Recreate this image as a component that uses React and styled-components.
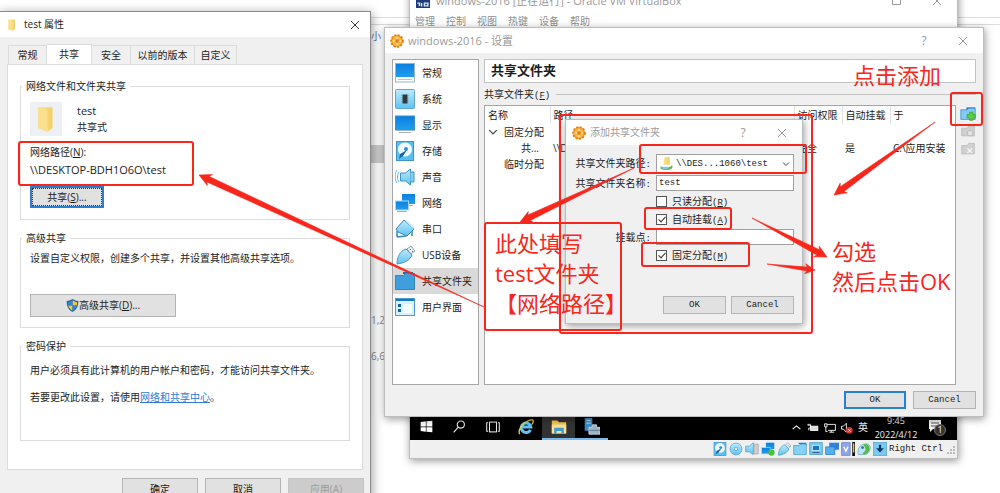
import React from "react";
import styled, { createGlobalStyle, css } from "styled-components";

const GlobalStyle = createGlobalStyle`
  * { box-sizing: border-box; }
  body { margin: 0; background: #fff; }
  button, input, select { font: inherit; color: inherit; margin: 0; }
`;

const SANS = `"Open Sans", "Noto Sans CJK SC", sans-serif`;
const MONO = `"Liberation Mono", "Noto Sans CJK SC", monospace`;
const RED = "#f9261c";

const Desktop = styled.main`
  position: relative;
  width: 100%;
  height: 100vh;
  overflow: hidden;
  background: #fff;
  font: 10px/17px ${SANS};
  color: #1c1c1c;
`;

/* ---------- file list behind the windows ---------- */

const FileList = styled.section`
  display: flex;
  flex-direction: column;
  color: #8a8a8a;
`;
const FileBar = styled.div`
  height: ${(p) => p.$h}px;
  border-bottom: 1px solid #dcdcdc;
`;
const FileRow = styled.div`
  width: 400px;
  height: ${(p) => p.$h || 18}px;
  padding-left: 371px;
  color: ${(p) => (p.$head ? "#5b6b94" : "#8a8a8a")};
  background: ${(p) => (p.$selected ? "#cccccc" : "transparent")};
`;

/* ---------- shared window parts ---------- */

const Window = styled.section`
  position: absolute;
  left: ${(p) => p.$x}px;
  top: ${(p) => p.$y}px;
  width: ${(p) => p.$w}px;
  height: ${(p) => p.$h}px;
  display: flex;
  flex-direction: column;
  background: #f0f0f0;
  border: 1px solid ${(p) => p.$edge || "#bdbdbd"};
  box-shadow: 1px 2px ${(p) => p.$blur || 8}px rgba(0, 0, 0, 0.4);
`;
const TitleBar = styled.header`
  display: flex;
  align-items: center;
  gap: ${(p) => p.$gap || 6}px;
  height: ${(p) => p.$h || 25}px;
  flex: none;
  padding: 0 ${(p) => p.$end || 15}px 0 ${(p) => p.$start || 6}px;
  background: #fff;
  color: ${(p) => (p.$active ? "#1c1c1c" : "#9a9a9a")};
`;
const Title = styled.h1`
  flex: 1;
  margin: 0;
  font-size: ${(p) => p.$size || 10}px;
  line-height: 17px;
  font-weight: 400;
  white-space: nowrap;
`;
const CaptionButton = styled.button`
  display: flex;
  align-items: center;
  justify-content: center;
  width: 10px;
  height: 17px;
  margin-left: ${(p) => p.$gap || 0}px;
  padding: 0;
  border: 0;
  background: none;
  font-size: 12px;
`;
const Close = ({ gap, color = "#9a9a9a" }) => (
  <CaptionButton $gap={gap} aria-label="关闭">
    <svg width="10" height="10" viewBox="0 0 10 10" stroke={color} fill="none">
      <path d="M1 1 9 9M9 1 1 9" />
    </svg>
  </CaptionButton>
);

const PushButton = styled.button`
  display: inline-flex;
  align-items: center;
  justify-content: center;
  width: ${(p) => p.$w}px;
  height: ${(p) => p.$h || 18}px;
  flex: none;
  padding: 0;
  border: 1px solid #b4b4b4;
  background: #e1e1e1;
  white-space: nowrap;
  ${(p) => p.$mono && css`font: 9px/12px ${MONO};`}
  ${(p) => p.$primary && css`border: 2px solid #2b7fd0;`}
  ${(p) => p.$focused && css`
    outline: 1px dotted #333;
    outline-offset: -3px;
  `}
  &:disabled { color: #9b9b9b; background: #cccccc; border-color: #c4c4c4; }
`;

/* ---------- properties window ---------- */

const Tabs = styled.div`
  display: flex;
  align-items: flex-end;
  height: 27px;
  flex: none;
  padding-left: 8px;
`;
const Tab = styled.button`
  height: ${(p) => (p.$selected ? 21 : 19)}px;
  width: ${(p) => p.$w}px;
  margin-bottom: ${(p) => (p.$selected ? -1 : 0)}px;
  padding: 0 0 ${(p) => (p.$selected ? 2 : 0)}px;
  border: 1px solid #dcdcdc;
  border-bottom: 0;
  border-left-width: ${(p) => (p.$first ? 1 : 0)}px;
  background: ${(p) => (p.$selected ? "#fff" : "#f0f0f0")};
  line-height: 17px;
  white-space: nowrap;
`;
const TabPanel = styled.div`
  display: flex;
  flex-direction: column;
  gap: 11px;
  height: 406px;
  flex: none;
  margin: 0 7px;
  padding: 14px 12px 0;
  border: 1px solid #dcdcdc;
  background: #fff;
`;
const Group = styled.fieldset`
  min-width: 0;
  height: ${(p) => p.$h}px;
  margin: 0;
  padding: 0 9px;
  border: 1px solid #dcdcdc;
`;
const Legend = styled.legend`
  padding: 0 4px;
  margin-left: -8px;
  line-height: 14px;
`;
const ShareRow = styled.div`
  display: flex;
  gap: 15px;
  margin: 9px 0 8px;
`;
const Thumb = styled.div`
  display: flex;
  align-items: center;
  justify-content: center;
  width: 32px;
  height: 34px;
  background: #eef0f3;
`;
const Text = styled.p`
  margin: ${(p) => p.$top || 0}px 0 ${(p) => p.$bottom || 0}px;
  font-size: ${(p) => (p.$latin ? 11 : 10)}px;
  line-height: 17px;
  white-space: nowrap;
`;
const Link = styled.a`
  color: #2a7bd8;
`;
const PropertyActions = styled.footer`
  display: flex;
  justify-content: flex-end;
  gap: 7px;
  padding: 8px 6px 0;
`;

/* ---------- virtual machine window ---------- */

const MenuBar = styled.nav`
  display: flex;
  gap: 11px;
  height: 15px;
  padding-left: 5px;
  background: #fff;
`;
const MenuItem = styled.button`
  padding: 0;
  border: 0;
  background: none;
  color: #8f8f8f;
  line-height: 15px;
`;
const GuestScreen = styled.div`
  flex: 1;
  background: #000;
`;
const TaskBar = styled.div`
  display: flex;
  align-items: center;
  height: 25px;
  flex: none;
  background: #000;
  color: #f0f0f0;
`;
const TaskButton = styled.button`
  display: flex;
  align-items: center;
  justify-content: center;
  width: 33px;
  height: 25px;
  padding: 0;
  border: 0;
  border-bottom: 2px solid ${(p) => (p.$running ? "#76b9ed" : "transparent")};
  background: ${(p) => (p.$current ? "#333" : "none")};
`;
const Tray = styled.div`
  display: flex;
  align-items: center;
  gap: 5px;
  margin-left: auto;
  padding-right: 11px;
`;
const Clock = styled.time`
  width: 46px;
  font-size: 9px;
  line-height: 14px;
  text-align: center;
  white-space: nowrap;
`;
const StatusBar = styled.footer`
  display: flex;
  align-items: center;
  justify-content: flex-end;
  gap: 2px;
  height: 18px;
  flex: none;
  background: #f0f0f0;
  font: 9px/12px ${MONO};
`;

/* ---------- settings window ---------- */

const SettingsBody = styled.div`
  display: grid;
  grid-template-columns: 87px 1fr;
  column-gap: 5px;
  padding: 6px 7px 0;
  height: 332px;
`;
const Categories = styled.nav`
  border: 1px solid #a6a6a6;
  background: #fff;
`;
const Category = styled.button`
  display: flex;
  align-items: center;
  gap: 7px;
  width: 100%;
  height: 26px;
  padding: 0 2px;
  border: 0;
  background: ${(p) => (p.$selected ? "#d9d9d9" : "none")};
  white-space: nowrap;
`;
const Page = styled.div`
  display: flex;
  flex-direction: column;
  min-width: 0;
`;
const PageTitle = styled.h2`
  height: 24px;
  flex: none;
  margin: 0;
  padding: 0 6px;
  border: 1px solid #c3c3c3;
  background: #fff;
  font: 700 13px/22px "Liberation Serif", "Noto Sans CJK SC", serif;
`;
const SectionLabel = styled.div`
  display: flex;
  align-items: center;
  gap: 6px;
  height: 22px;
  flex: none;
  &::after { content: ""; flex: 1; height: 1px; background: #c3c3c3; }
`;
const Mono = styled.span`
  font: 9px/12px ${MONO};
`;
const ListArea = styled.div`
  display: flex;
  gap: 3px;
  flex: 1;
`;
const TableFrame = styled.div`
  flex: 1;
  min-width: 0;
  overflow: hidden;
  border: 1px solid #a6a6a6;
  background: #fff;
`;
const Table = styled.table`
  width: 100%;
  table-layout: fixed;
  border-collapse: collapse;
  th, td {
    height: 16px;
    padding: 0 0 0 3px;
    line-height: 15px;
    font-weight: 400;
    text-align: left;
    white-space: nowrap;
  }
  thead th { height: 18px; border-right: 1px solid #e2e2e2; }
  thead th:last-child { border-right: 0; }
`;
const Branch = styled.span`
  display: flex;
  align-items: center;
  gap: 6px;
  padding-left: ${(p) => p.$indent || 0}px;
`;
const ToolColumn = styled.div`
  display: flex;
  flex-direction: column;
  align-items: center;
  gap: 2px;
  width: 17px;
`;
const ToolButton = styled.button`
  width: 16px;
  height: 16px;
  padding: 0;
  border: 0;
  background: none;
  line-height: 0;
`;
const Actions = styled.footer`
  display: flex;
  justify-content: flex-end;
  gap: ${(p) => p.$gap || 7}px;
  padding: ${(p) => p.$top}px ${(p) => p.$side}px 0;
`;

/* ---------- add share dialog ---------- */

const Form = styled.form`
  display: grid;
  grid-template-columns: 78px 1fr;
  grid-template-rows: 19px repeat(5, 16px);
  gap: 2px 5px;
  align-items: center;
  padding: 9px 8px 0 7px;
`;
const FieldLabel = styled.label`
  text-align: right;
  white-space: nowrap;
`;
const SelectBox = styled.div`
  display: flex;
  align-items: center;
  gap: 3px;
  height: 19px;
  padding: 0 3px;
  border: 1px solid #a0a0a0;
  background: #fff;
`;
const Select = styled.select`
  flex: 1;
  min-width: 0;
  padding: 0;
  border: 0;
  appearance: none;
  background: none;
  font: 9px/12px ${MONO};
`;
const Input = styled.input`
  width: 100%;
  min-width: 0;
  height: 16px;
  padding: 0 2px;
  border: 1px solid #a0a0a0;
  background: #fff;
  font: 9px/12px ${MONO};
`;
const Check = styled.label`
  grid-column: 2;
  display: flex;
  align-items: center;
  gap: 5px;
  white-space: nowrap;
`;
const Box = styled.input`
  display: grid;
  place-content: center;
  width: 11px;
  height: 11px;
  appearance: none;
  border: 1px solid #555;
  background: #fff;
  &:checked::after {
    content: "";
    width: 3px;
    height: 6px;
    margin-bottom: 2px;
    border: solid #333;
    border-width: 0 1px 1px 0;
    transform: rotate(42deg);
  }
`;

/* ---------- red annotations ---------- */

const Frame = styled.div`
  position: absolute;
  left: ${(p) => p.$x}px;
  top: ${(p) => p.$y}px;
  width: ${(p) => p.$w}px;
  height: ${(p) => p.$h}px;
  border: 2px solid ${RED};
  border-radius: 3px;
  pointer-events: none;
`;
const Note = styled.p`
  position: absolute;
  left: ${(p) => p.$x}px;
  top: ${(p) => p.$y}px;
  margin: 0;
  color: ${RED};
  font-size: 22px;
  line-height: 30px;
  white-space: nowrap;
`;
const ArrowLayer = styled.svg`
  position: absolute;
  left: 0;
  top: 0;
  width: 100%;
  height: 100%;
  pointer-events: none;
`;

function Arrow({ from, to, head = 12, spread = 6, body = 3 }) {
  const [x1, y1] = from;
  const [x2, y2] = to;
  const len = Math.hypot(x2 - x1, y2 - y1);
  const ux = (x2 - x1) / len;
  const uy = (y2 - y1) / len;
  const at = (back, side) =>
    `${(x2 - ux * back - uy * side).toFixed(1)},${(y2 - uy * back + ux * side).toFixed(1)}`;
  const pts = [
    `${x1},${y1}`,
    at(head - 2, body),
    at(head, spread),
    `${x2},${y2}`,
    at(head, -spread),
    at(head - 2, -body),
  ];
  return <polygon points={pts.join(" ")} fill={RED} stroke={RED} strokeWidth="0.6" />;
}

/* ---------- icons ---------- */

const Gradients = () => (
  <svg width="0" height="0" style={{ position: "absolute" }} aria-hidden="true">
    <defs>
      <linearGradient id="screen" x1="0" y1="0" x2="0" y2="1">
        <stop offset="0" stopColor="#0c7fe0" />
        <stop offset="1" stopColor="#1f9fee" />
      </linearGradient>
      <linearGradient id="pale" x1="0" y1="0" x2="0" y2="1">
        <stop offset="0" stopColor="#bfeafd" />
        <stop offset="1" stopColor="#5fc3f0" />
      </linearGradient>
      <linearGradient id="folder" x1="0" y1="0" x2="1" y2="0">
        <stop offset="0" stopColor="#fbe49a" />
        <stop offset="1" stopColor="#f3cf62" />
      </linearGradient>
    </defs>
  </svg>
);

const shapes = {
  general: (
    <>
      <rect x=".5" y=".5" width="19" height="18.5" fill="#fff" stroke="#9ab4c8" />
      <rect x="1" y="1" width="18" height="13" fill="url(#screen)" />
      <path d="M3 16.5h14" stroke="#b8c8d4" />
    </>
  ),
  system: (
    <>
      <rect x=".5" y=".5" width="19" height="19" rx="1" fill="url(#pale)" stroke="#59a9d2" />
      <rect x="7.5" y="5.5" width="5" height="9" fill="#35383c" />
      <path d="M6.500 6v8M13.500 6v8" stroke="#8fb4c8" strokeDasharray="1 1" />
    </>
  ),
  display: (
    <>
      <rect x=".5" y="1" width="19" height="14" fill="url(#screen)" stroke="#3790cc" />
      <path d="M1 15.5h18M4 17.5h12" stroke="#9fb8c9" />
    </>
  ),
  storage: (
    <>
      <rect x="1.5" y=".5" width="17" height="19" fill="#59bff0" stroke="#3a94c9" />
      <circle cx="10" cy="8.5" r="7" fill="#eef8fd" />
      <circle cx="11" cy="8" r="2" fill="#2c93d3" />
      <path d="m4 18 1-5 7-4-4 6z" fill="#1668a5" />
    </>
  ),
  audio: (
    <>
      <path d="M5.500 6h5l5-4v16l-5-4h-5z" fill="url(#pale)" stroke="#3e94c4" />
      <path d="M4 5C2 8 2 12 4 15M2 3C-.5 7-.5 12 2 16" stroke="#62b3dd" fill="none" />
      <path d="M15.500 5h3.500v10h-3.500" fill="#7ed0f5" stroke="#3e94c4" />
    </>
  ),
  network: (
    <>
      <rect x="7" y="1" width="13" height="10" fill="url(#screen)" />
      <path d="M10 12.500h8" stroke="#93b5ca" />
      <rect x=".5" y="8" width="13" height="9" fill="url(#screen)" stroke="#a5d7f2" />
      <path d="M2 18.500h10" stroke="#93b5ca" />
    </>
  ),
  serial: (
    <>
      <path d="m9 1 10 9-7 7-9-4-2-3z" fill="url(#pale)" stroke="#3688bd" />
      <path d="M12 2l7 7" stroke="#d7eefa" strokeWidth="2" />
      <path d="M2 12v6M17 12v5M11 17l-9 1" stroke="#3688bd" fill="none" strokeWidth="1.500" />
    </>
  ),
  usb: (
    <>
      <path d="m12 4 4-3 4 5-4 3z" fill="#f2f7fa" stroke="#8aa3b3" />
      <path d="M11 4 17 10c-2 5-7 8-15 9C2 12 5 6 11 4z" fill="url(#pale)" stroke="#4a9bc8" />
      <path d="m15 4 1 1M17 6l1 1" stroke="#555" />
    </>
  ),
  folder: (
    <>
      <path d="M8 3V1h10v3" fill="#1870ae" />
      <path d="M.5 4.500h8l2-2h9v16H.5z" fill="#3f9edb" stroke="#2f86c2" />
    </>
  ),
  ui: (
    <>
      <rect x=".5" y="1.500" width="19" height="17" fill="#d4f1fd" stroke="#4b9bc8" />
      <path d="M1 3h18" stroke="#1a78bd" strokeWidth="2" />
      <path d="M3 7h3v3H3zM3 12h3v3H3z" fill="#17639f" />
      <path d="M8 7h9v9H8z" fill="#f5fcff" />
    </>
  ),
  gear: (
    <>
      <circle cx="10" cy="10" r="8.500" fill="#f6a01f" stroke="#e08217" strokeWidth="2.500" strokeDasharray="3 2" />
      <circle cx="10" cy="10" r="6.500" fill="#fbb645" />
      <circle cx="10" cy="10" r="2.500" fill="#e07e12" />
      <path d="M10 4v3M10 13v3M4 10h3M13 10h3" stroke="#fff0c8" strokeWidth="1.500" />
    </>
  ),
  openFolder: (
    <>
      <path d="M4 1h11v16l-4 3v-3H4z" fill="url(#folder)" />
      <path d="M4 1 11 3v17L4 17z" fill="#f9df8e" />
    </>
  ),
  shareFolder: (
    <>
      <path d="M7 0h8v12H5z" fill="url(#folder)" />
      <path d="M1 14c4 4 14 4 18-2v5c-4 4-14 4-18 1z" fill="#57b947" />
      <path d="M4 15h8v4H4z" fill="#7cc7ec" />
    </>
  ),
  shield: (
    <>
      <path d="M10 0c3 2 6 3 9 3 0 8-2 13-9 17C3 16 1 11 1 3c3 0 6-1 9-3z" fill="#2864a8" />
      <path d="M10 2c2 1 5 3 7 3 0 2 0 3-.5 5H10z" fill="#f6c938" />
      <path d="M3.500 10H10v8c-4-2-6-5-6.500-8z" fill="#f6c938" />
      <path d="M10 10h6.500c-1 4-3 6-6.500 8z" fill="#2f86dc" />
      <path d="M10 2C8 3 5 5 3 5c0 2 0 3 .5 5H10z" fill="#2f86dc" />
    </>
  ),
  addShare: (
    <>
      <path d="M8 3h11v5H8z" fill="#2878bd" />
      <path d="M1 6h8l2-2h8v14H1z" fill="#7fcbf3" stroke="#3d92c9" />
      <path d="M12 9h4v3h3v4h-3v3h-4v-3H9v-4h3z" fill="#5fd03c" stroke="#3aa02a" />
    </>
  ),
  editShare: (
    <>
      <path d="M1 6h8l2-3h8v14H1z" fill="#d0d0d0" stroke="#b5b5b5" />
      <circle cx="13" cy="13" r="4" fill="#e2e2e2" stroke="#b0b0b0" />
    </>
  ),
  removeShare: (
    <>
      <path d="M1 5h8l2-3h8v15H1z" fill="#d0d0d0" stroke="#b5b5b5" />
      <path d="m9 9 7 7M16 9l-7 7" stroke="#f2f2f2" strokeWidth="2" />
    </>
  ),
  vm: (
    <>
      <rect width="20" height="20" fill="#1d3c78" />
      <path d="M2 13h3v4M8 13v5M12 13h5v4h-5z" stroke="#dfe8f5" strokeWidth="2" fill="none" />
    </>
  ),
  windows: <path d="m1 3 8-1v8H1zM10 2l9-1v9h-9zM1 11h8v7l-8-1zM10 11h9v8l-9-1z" fill="#fff" />,
  search: (
    <g stroke="#f0f0f0" strokeWidth="1.600" fill="none">
      <circle cx="12" cy="7" r="5.500" />
      <path d="m8 11-7 8" />
    </g>
  ),
  taskView: (
    <g stroke="#e8e8e8" strokeWidth="1.500" fill="none">
      <rect x="5" y="3" width="10" height="14" />
      <path d="M3 4H1v12h2M17 4h2v12h-2" />
    </g>
  ),
  ie: (
    <>
      <path d="M15.500 13.500A6 6 0 1 1 16 10H6" stroke="#5fc4f4" strokeWidth="3.800" fill="none" />
      <path d="M2 19C-1 13 9 1 18 1c2 1 1 4-1 6" stroke="#f0d33c" strokeWidth="1.600" fill="none" />
    </>
  ),
  explorer: (
    <>
      <path d="M1 2h7l2 2h9v14H1z" fill="#f5c75a" />
      <path d="M1 7h18v11H1z" fill="#fce196" />
      <path d="M4 18v-7h12v7h-3v-3H7v3z" fill="#3b9fc9" />
    </>
  ),
  server: (
    <>
      <path d="M2 0h9v15H2z" fill="#368fc9" />
      <path d="M4 3h5M4 6h5" stroke="#d8effb" />
      <path d="M7 11h4V8h5v3h4v8H7z" fill="#9ab3c4" stroke="#d2dde5" />
      <path d="M7 14.500h13" stroke="#5d7586" />
    </>
  ),
  chevronUp: <path d="m3 13 7-6 7 6" stroke="#fff" strokeWidth="2" fill="none" />,
  battery: (
    <>
      <rect x="6" y="7" width="12" height="7" fill="#ddd" stroke="#fff" strokeWidth="1.500" />
      <path d="M1 5h5v5H3v4M2 3v3M5 3v3" stroke="#fff" strokeWidth="1.500" fill="none" />
    </>
  ),
  lan: (
    <g stroke="#fff" strokeWidth="1.500" fill="none">
      <path d="M5 4h14v10H7M9 17h8M12 14v3" />
      <path d="M1 3h4v5H1zM3 8v8h3" />
    </g>
  ),
  muted: (
    <>
      <path d="M1 7h3l5-5v15l-5-5H1z" stroke="#fff" strokeWidth="1.500" fill="none" />
      <circle cx="14" cy="14" r="5.500" fill="#d9342b" />
      <path d="m12 12 4 4M16 12l-4 4" stroke="#fff" strokeWidth="1.500" />
    </>
  ),
  disc: (
    <>
      <circle cx="10" cy="10" r="8.500" fill="url(#pale)" stroke="#4f9fc9" />
      <circle cx="10" cy="10" r="2.500" fill="#e9f8ff" stroke="#4f9fc9" />
    </>
  ),
  speaker: (
    <>
      <path d="M1 6h5l6-5v17l-6-4H1z" fill="url(#pale)" stroke="#4c94bb" />
      <path d="M13 3h6v14h-6z" fill="#cfcfcf" stroke="#a3a3a3" />
    </>
  ),
  adapter: (
    <>
      <rect x="7" y="1" width="12" height="9" fill="url(#screen)" />
      <rect x="1" y="8" width="12" height="9" fill="url(#screen)" stroke="#a5d7f2" />
      <circle cx="15" cy="15" r="4.500" fill="#4cc23a" />
    </>
  ),
  shared: (
    <>
      <path d="M8 3V1h11v4" fill="#2678b8" />
      <path d="M1 5h8l2-2h8v15H1z" fill="#84d2f7" stroke="#3c97cd" />
    </>
  ),
  monitor: (
    <>
      <rect x="1" y="1" width="18" height="17" fill="#76c8f2" stroke="#3c97cd" />
      <rect x="5" y="5" width="10" height="7" fill="#1876c9" stroke="#e4f6ff" />
      <path d="M5 15h10" stroke="#2c5f86" strokeWidth="1.500" />
    </>
  ),
  windowsPair: (
    <>
      <rect x="6" y="1" width="14" height="10" fill="#2f83dc" />
      <rect x="1" y="7" width="13" height="11" fill="#55b0f0" stroke="#2b72c4" />
    </>
  ),
  chip: (
    <>
      <rect x="1" y="1" width="12" height="18" fill="#8fa6e8" stroke="#6573c2" />
      <path d="m4 7 3 6 3-6" stroke="#fff" strokeWidth="2" fill="none" />
      <rect x="16" y="0" width="4" height="20" fill="#111" />
      <path d="M18 2v13" stroke="#f2c531" strokeWidth="2" />
    </>
  ),
  mouse: (
    <>
      <path d="M2 18C-1 8 7 1 16 3c6 4 2 13-4 15z" fill="#bfe3ee" stroke="#5ba2b7" />
      <path d="M9 4c7-3 11 4 8 9-3 5-8 6-9 3 5-3 6-6 1-12z" fill="#54bb45" />
      <circle cx="8" cy="8" r="2" fill="#1f74a8" />
    </>
  ),
  hostKey: (
    <>
      <rect x=".5" y=".5" width="19" height="19" fill="#79c9f2" stroke="#53a5cf" />
      <path d="M8.500 4h3v5h4l-5.500 6-5.500-6h4z" fill="#0c3a5c" />
    </>
  ),
};

const Icon = ({ name, size = 20 }) => (
  <svg width={size} height={size} viewBox="0 0 20 20" aria-hidden="true" style={{ flex: "none" }}>
    {shapes[name]}
  </svg>
);

const Chevron = ({ color = "#444", size = 8 }) => (
  <svg width={size} height={size} viewBox="0 0 8 8" fill="none" stroke={color} aria-hidden="true">
    <path d="m1 2.500 3 3 3-3" />
  </svg>
);

/* ---------- windows ---------- */

const PropertiesWindow = () => (
  <Window $x={-1} $y={11} $w={372} $h={500} $edge="#8a8a8a" $blur={10}>
    <TitleBar $active $start={6} $end={10}>
      <Icon name="openFolder" size={12} />
      <Title>test 属性</Title>
      <Close color="#333" />
    </TitleBar>
    <Tabs role="tablist">
      <Tab role="tab" $w={39} $first>常规</Tab>
      <Tab role="tab" $w={45} $selected>共享</Tab>
      <Tab role="tab" $w={39}>安全</Tab>
      <Tab role="tab" $w={64}>以前的版本</Tab>
      <Tab role="tab" $w={42}>自定义</Tab>
    </Tabs>
    <TabPanel>
      <Group $h={141}>
        <Legend>网络文件和文件夹共享</Legend>
        <ShareRow>
          <Thumb><Icon name="openFolder" size={26} /></Thumb>
          <div>
            <Text $latin>test</Text>
            <Text>共享式</Text>
          </div>
        </ShareRow>
        <Text>网络路径(<u>N</u>):</Text>
        <Text $latin $bottom={8}>\\DESKTOP-BDH1O6O\test</Text>
        <PushButton $w={74} $h={22} $primary $focused>共享(<u>S</u>)...</PushButton>
      </Group>
      <Group $h={97}>
        <Legend>高级共享</Legend>
        <Text $top={5} $bottom={27}>设置自定义权限，创建多个共享，并设置其他高级共享选项。</Text>
        <PushButton $w={146} $h={23}>
          <Icon name="shield" size={13} />高级共享(<u>D</u>)...
        </PushButton>
      </Group>
      <Group $h={102}>
        <Legend>密码保护</Legend>
        <Text $top={9} $bottom={10}>用户必须具有此计算机的用户帐户和密码，才能访问共享文件夹。</Text>
        <Text>若要更改此设置，请使用<Link href="#sharing-center">网络和共享中心</Link>。</Text>
      </Group>
    </TabPanel>
    <PropertyActions>
      <PushButton $w={76} $h={23}>确定</PushButton>
      <PushButton $w={76} $h={23}>取消</PushButton>
      <PushButton $w={76} $h={23} disabled>应用(A)</PushButton>
    </PropertyActions>
  </Window>
);

const statusIcons = [
  "storage", "disc", "speaker", "adapter", "usb", "shared",
  "monitor", "windowsPair", "chip", "mouse", "hostKey",
];

const MachineWindow = () => (
  <Window $x={409} $y={-14} $w={549} $h={473}>
    <TitleBar $h={27}>
      <Icon name="vm" size={14} />
      <Title $size={11}>windows-2016 [正在运行] - Oracle VM VirtualBox</Title>
      <CaptionButton aria-label="最大化">
        <svg width="10" height="10" fill="none" stroke="#9a9a9a"><path d="M.5.5h8v8h-8z" /></svg>
      </CaptionButton>
      <Close gap={24} />
    </TitleBar>
    <MenuBar>
      {["管理", "控制", "视图", "热键", "设备", "帮助"].map((m) => <MenuItem key={m}>{m}</MenuItem>)}
    </MenuBar>
    <GuestScreen />
    <TaskBar>
      <TaskButton aria-label="开始"><Icon name="windows" size={13} /></TaskButton>
      <TaskButton aria-label="搜索"><Icon name="search" size={13} /></TaskButton>
      <TaskButton aria-label="任务视图"><Icon name="taskView" size={14} /></TaskButton>
      <TaskButton aria-label="浏览器"><Icon name="ie" size={16} /></TaskButton>
      <TaskButton aria-label="文件资源管理器" $running $current><Icon name="explorer" size={16} /></TaskButton>
      <TaskButton aria-label="服务器管理器" $running><Icon name="server" size={17} /></TaskButton>
      <Tray>
        <Icon name="chevronUp" size={11} />
        <Icon name="battery" size={12} />
        <Icon name="lan" size={12} />
        <Icon name="muted" size={12} />
        <span>英</span>
        <Clock>9:45<br />2022/4/12</Clock>
        <svg width="22" height="17" viewBox="0 0 22 17" aria-hidden="true">
          <path d="M5 1h12v9H9l-3 3v-3H5z" fill="#f0f0f0" />
          <path d="M7 4h8M7 7h6" stroke="#555" />
          <circle cx="16" cy="11" r="5.500" fill="#333" stroke="#777" />
          <text x="16" y="14" fontSize="9" fill="#fff" textAnchor="middle">1</text>
        </svg>
      </Tray>
    </TaskBar>
    <StatusBar>
      {statusIcons.map((n) => <Icon key={n} name={n} size={14} />)}
      <span>Right Ctrl</span>
      <svg width="12" height="12" fill="#bbb" aria-hidden="true">
        <path d="M8 3h2v2H8zM5 6h2v2H5zM8 6h2v2H8zM2 9h2v2H2zM5 9h2v2H5zM8 9h2v2H8z" />
      </svg>
    </StatusBar>
  </Window>
);

const categories = [
  ["general", "常规"], ["system", "系统"], ["display", "显示"], ["storage", "存储"],
  ["audio", "声音"], ["network", "网络"], ["serial", "串口"], ["usb", "USB设备"],
  ["folder", "共享文件夹"], ["ui", "用户界面"],
];

const SettingsWindow = () => (
  <Window $x={384} $y={27} $w={600} $h={390}>
    <TitleBar $start={5} $end={15} $gap={4}>
      <Icon name="gear" size={14} />
      <Title $size={11}>windows-2016 - 设置</Title>
      <CaptionButton aria-label="帮助">?</CaptionButton>
      <Close gap={25} />
    </TitleBar>
    <SettingsBody>
      <Categories>
        {categories.map(([icon, label]) => (
          <Category key={icon} $selected={icon === "folder"}>
            <Icon name={icon} />{label}
          </Category>
        ))}
      </Categories>
      <Page>
        <PageTitle>共享文件夹</PageTitle>
        <SectionLabel><span>共享文件夹<Mono>(<u>F</u>)</Mono></span></SectionLabel>
        <ListArea>
          <TableFrame>
            <Table>
              <colgroup>
                <col style={{ width: 65 }} />
                <col style={{ width: 244 }} />
                <col style={{ width: 48 }} />
                <col style={{ width: 48 }} />
                <col />
              </colgroup>
              <thead>
                <tr><th>名称</th><th>路径</th><th>访问权限</th><th>自动挂载</th><th>于</th></tr>
              </thead>
              <tbody>
                <tr><td><Branch><Chevron size={10} />固定分配</Branch></td><td /><td /><td /><td /></tr>
                <tr>
                  <td><Branch $indent={33}>共...</Branch></td>
                  <td>\\DESKTOP-BDH1O6O\test</td><td>完全</td><td>是</td><td>C:\应用安装</td>
                </tr>
                <tr><td><Branch $indent={16}>临时分配</Branch></td><td /><td /><td /><td /></tr>
              </tbody>
            </Table>
          </TableFrame>
          <ToolColumn>
            <ToolButton aria-label="添加共享"><Icon name="addShare" size={16} /></ToolButton>
            <ToolButton aria-label="编辑共享"><Icon name="editShare" size={14} /></ToolButton>
            <ToolButton aria-label="删除共享"><Icon name="removeShare" size={14} /></ToolButton>
          </ToolColumn>
        </ListArea>
      </Page>
    </SettingsBody>
    <Actions $top={6} $side={7}>
      <PushButton $w={62} $mono $primary>OK</PushButton>
      <PushButton $w={63} $mono>Cancel</PushButton>
    </Actions>
  </Window>
);

const AddShareDialog = () => (
  <Window $x={565} $y={119} $w={238} $h={205}>
    <TitleBar $start={6} $end={15} $gap={4}>
      <Icon name="gear" size={14} />
      <Title>添加共享文件夹</Title>
      <CaptionButton aria-label="帮助">?</CaptionButton>
      <Close gap={25} />
    </TitleBar>
    <Form>
      <FieldLabel htmlFor="path">共享文件夹路径<Mono>:</Mono></FieldLabel>
      <SelectBox>
        <Icon name="shareFolder" size={13} />
        <Select id="path"><option>\\DES...1060\test</option></Select>
        <Chevron />
      </SelectBox>
      <FieldLabel htmlFor="name">共享文件夹名称<Mono>:</Mono></FieldLabel>
      <Input id="name" defaultValue="test" />
      <Check><Box type="checkbox" /><span>只读分配<Mono>(<u>R</u>)</Mono></span></Check>
      <Check><Box type="checkbox" defaultChecked /><span>自动挂载<Mono>(<u>A</u>)</Mono></span></Check>
      <FieldLabel htmlFor="mount">挂载点<Mono>:</Mono></FieldLabel>
      <Input id="mount" />
      <Check><Box type="checkbox" defaultChecked /><span>固定分配<Mono>(<u>M</u>)</Mono></span></Check>
    </Form>
    <Actions $top={33} $side={8} $gap={5}>
      <PushButton $w={63} $mono>OK</PushButton>
      <PushButton $w={63} $mono>Cancel</PushButton>
    </Actions>
  </Window>
);

export default function App() {
  return (
    <Desktop>
      <GlobalStyle />
      <Gradients />
      <FileList>
        <FileBar $h={18} />
        <FileBar $h={7} />
        <FileRow $h={120} $head><Text $top={3}>小</Text></FileRow>
        <FileRow $selected />
        <FileRow $h={149} />
        <FileRow $h={36}>1,2</FileRow>
        <FileRow>6,6</FileRow>
      </FileList>
      <MachineWindow />
      <PropertiesWindow />
      <SettingsWindow />
      <AddShareDialog />

      <Frame $x={18} $y={141} $w={176} $h={45} />
      <Frame $x={950} $y={92} $w={33} $h={34} />
      <Frame $x={559} $y={114} $w={254} $h={220} />
      <Frame $x={639} $y={144} $w={168} $h={30} />
      <Frame $x={644} $y={207} $w={88} $h={23} />
      <Frame $x={641} $y={242} $w={109} $h={25} />
      <Frame $x={484} $y={222} $w={138} $h={109} />
      <ArrowLayer aria-hidden="true">
        <Arrow from={[484, 307]} to={[199, 175]} />
        <Arrow from={[634, 168]} to={[520, 222]} />
        <Arrow from={[935, 122]} to={[834, 195]} />
        <Arrow from={[752, 218]} to={[827, 257]} />
        <Arrow from={[767, 264]} to={[815, 270]} head={10} spread={5} body={2} />
      </ArrowLayer>
      <Note $x={853} $y={60}>点击添加</Note>
      <Note $x={495} $y={228}>此处填写<br />test文件夹<br />【网络路径】</Note>
      <Note $x={832} $y={236}>勾选<br />然后点击OK</Note>
    </Desktop>
  );
}
